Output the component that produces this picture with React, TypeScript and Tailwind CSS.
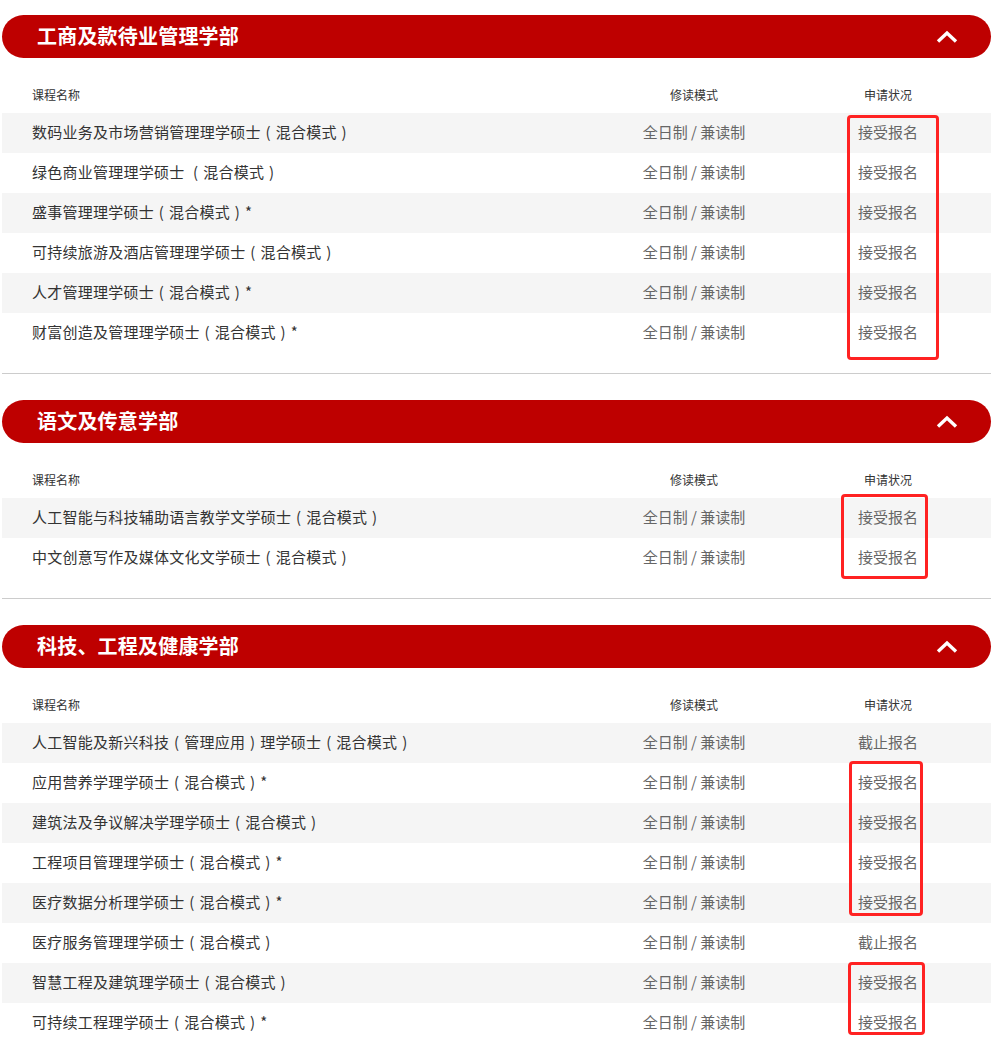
import React from "react";

type Course = {
  name: string;
  open: boolean;
};

type Faculty = {
  title: string;
  courses: Course[];
};

const faculties: Faculty[] = [
  {
    title: "工商及款待业管理学部",
    courses: [
      { name: "数码业务及市场营销管理理学硕士（混合模式）", open: true },
      { name: "绿色商业管理理学硕士 （混合模式）", open: true },
      { name: "盛事管理理学硕士（混合模式）*", open: true },
      { name: "可持续旅游及酒店管理理学硕士（混合模式）", open: true },
      { name: "人才管理理学硕士（混合模式）*", open: true },
      { name: "财富创造及管理理学硕士（混合模式）*", open: true },
    ],
  },
  {
    title: "语文及传意学部",
    courses: [
      { name: "人工智能与科技辅助语言教学文学硕士（混合模式）", open: true },
      { name: "中文创意写作及媒体文化文学硕士（混合模式）", open: true },
    ],
  },
  {
    title: "科技、工程及健康学部",
    courses: [
      { name: "人工智能及新兴科技（管理应用）理学硕士（混合模式）", open: false },
      { name: "应用营养学理学硕士（混合模式）*", open: true },
      { name: "建筑法及争议解决学理学硕士（混合模式）", open: true },
      { name: "工程项目管理理学硕士（混合模式）*", open: true },
      { name: "医疗数据分析理学硕士（混合模式）*", open: true },
      { name: "医疗服务管理理学硕士（混合模式）", open: false },
      { name: "智慧工程及建筑理学硕士（混合模式）", open: true },
      { name: "可持续工程理学硕士（混合模式）*", open: true },
    ],
  },
];

// full-width brackets drawn centred in their cell, like the original font does
function CourseName({ name }: { name: string }) {
  const parts = name.split(/([（）])/);
  return (
    <>
      {parts.map((p, i) =>
        p === "（" || p === "）" ? (
          <span key={i} className="inline-block w-[15px] text-center">
            {p === "（" ? "(" : ")"}
          </span>
        ) : (
          <React.Fragment key={i}>{p}</React.Fragment>
        )
      )}
    </>
  );
}

function ChevronUp() {
  return (
    <svg width="22" height="13" viewBox="0 0 22 13" fill="none">
      <path
        d="M2 11.5 L11 3 L20 11.5"
        stroke="white"
        strokeWidth="3.4"
        strokeLinecap="butt"
        strokeLinejoin="miter"
      />
    </svg>
  );
}

function FacultySection({ faculty, last }: { faculty: Faculty; last: boolean }) {
  return (
    <section>
      <div className="h-[43px] rounded-full bg-[#be0000] flex items-center justify-between pl-[35px] pr-[33px]">
        <h2 className="text-[20px] leading-[28px] font-bold text-white tracking-[0.2px] -mt-[2px]">
          {faculty.title}
        </h2>
        <ChevronUp />
      </div>

      <div className="grid grid-cols-[592px_200px_188px] h-[55px] pt-[29px] text-[12px] leading-[16px] text-[#333]">
        <div className="pl-[30px]">课程名称</div>
        <div className="text-center">修读模式</div>
        <div className="text-center">申请状况</div>
      </div>

      <div>
        {faculty.courses.map((c, i) => (
          <div
            key={c.name}
            className={`grid grid-cols-[592px_200px_188px] h-[40px] items-center text-[15px] leading-[20px] pb-[2px] ${
              i % 2 === 0 ? "bg-[#f5f5f5]" : "bg-white"
            }`}
          >
            <div className="pl-[30px] text-[#333] tracking-[0.25px]">
              <CourseName name={c.name} />
            </div>
            <div className="text-center text-[#666]">全日制 / 兼读制</div>
            <div className="text-center text-[#666]">
              {c.open ? "接受报名" : "截止报名"}
            </div>
          </div>
        ))}
      </div>

      {!last && <div className="mt-[20px] mb-[26px] h-px bg-[#cccccc]" />}
    </section>
  );
}

export default function App() {
  return (
    <div
      className="relative w-[997px] min-h-[1039px] bg-white overflow-hidden"
      style={{
        fontFamily:
          '"Noto Sans CJK SC", "Noto Sans", "Liberation Sans", sans-serif',
      }}
    >
      <div className="ml-[2px] w-[989px] pt-[15px]">
        {faculties.map((f, i) => (
          <FacultySection
            key={f.title}
            faculty={f}
            last={i === faculties.length - 1}
          />
        ))}
      </div>

      {/* annotation boxes */}
      <div className="absolute left-[847px] top-[115px] w-[92px] h-[245px] border-[3px] border-[#ff2222] rounded-[4px]" />
      <div className="absolute left-[841px] top-[494px] w-[87px] h-[85px] border-[3px] border-[#ff2222] rounded-[4px]" />
      <div className="absolute left-[849px] top-[761px] w-[74px] h-[155px] border-[3px] border-[#ff2222] rounded-[4px]" />
      <div className="absolute left-[848px] top-[962px] w-[77px] h-[73px] border-[3px] border-[#ff2222] rounded-[4px]" />
    </div>
  );
}
